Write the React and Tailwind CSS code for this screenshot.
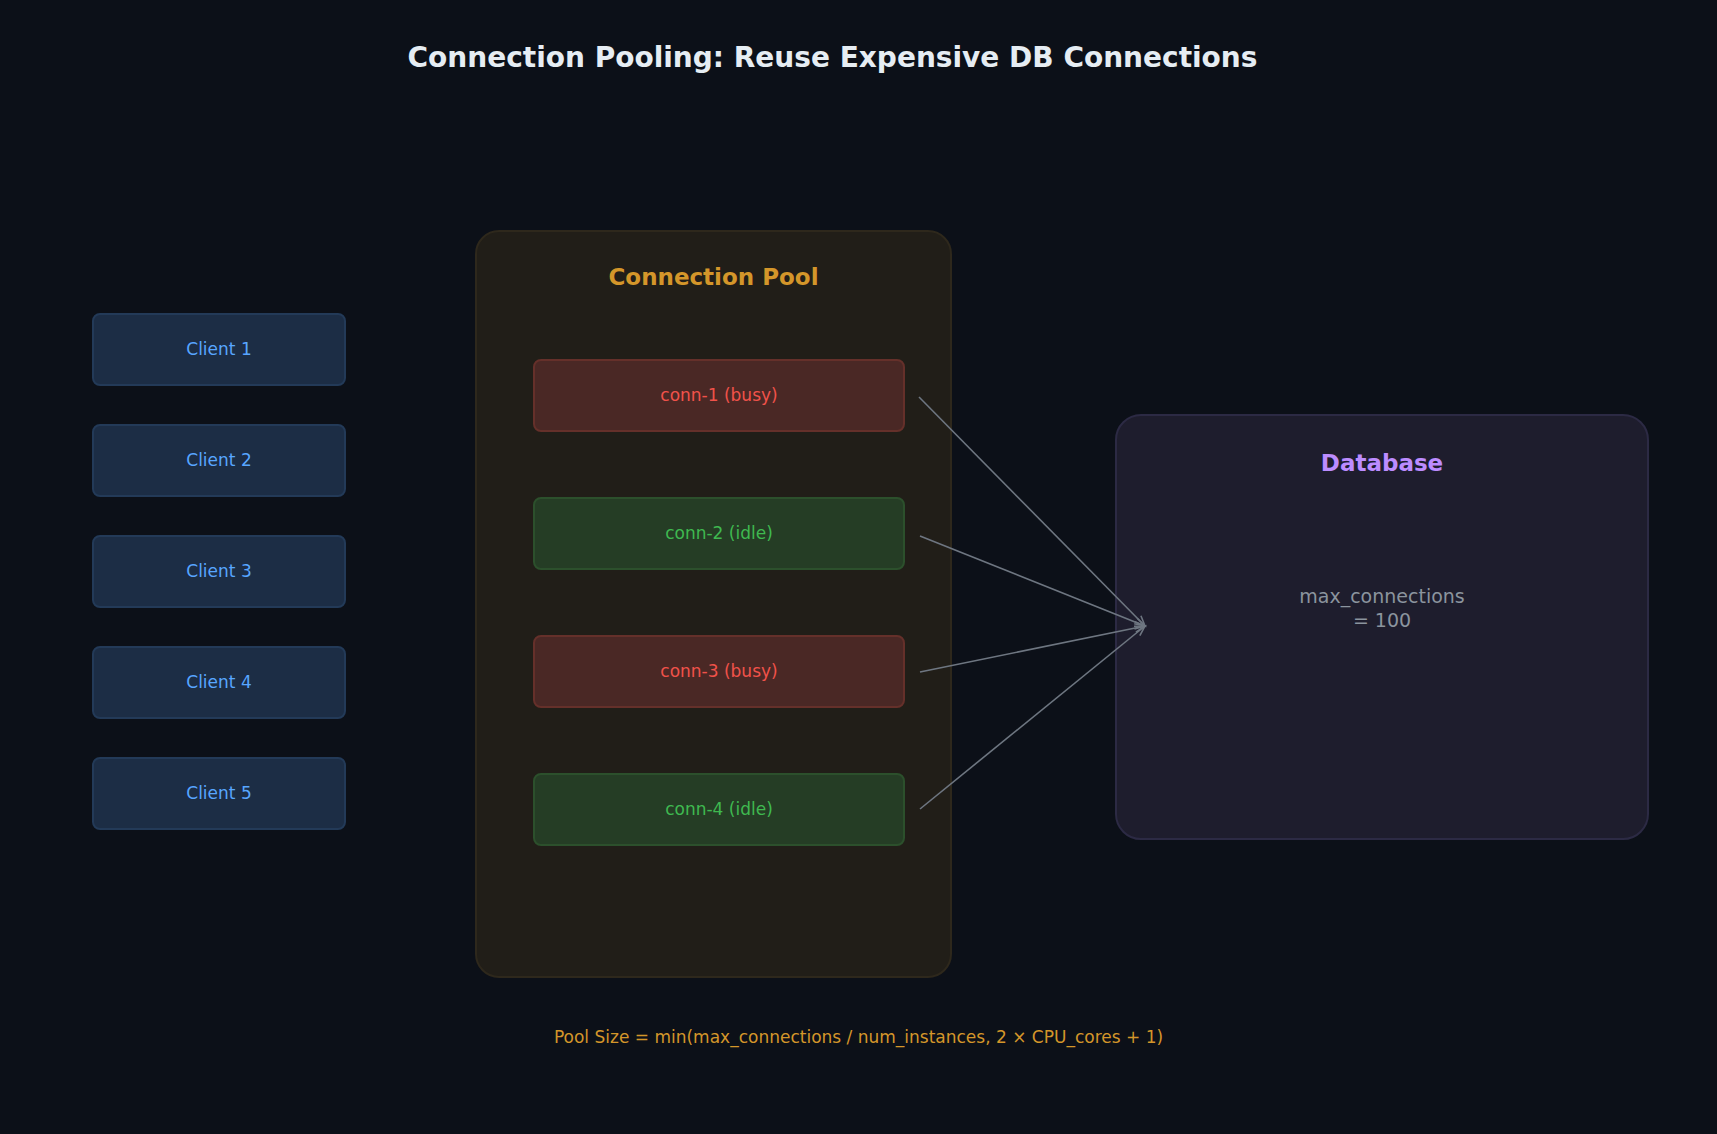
export default function App() {
  const clients = ["Client 1", "Client 2", "Client 3", "Client 4", "Client 5"];
  const conns = [
    { t: "conn-1 (busy)", busy: true },
    { t: "conn-2 (idle)", busy: false },
    { t: "conn-3 (busy)", busy: true },
    { t: "conn-4 (idle)", busy: false },
  ];
  return (
    <div className="relative w-[1717px] h-[1134px] bg-[#0c1018] overflow-hidden" style={{ fontFamily: '"DejaVu Sans", sans-serif' }}>
      <div className="pt-[40px] pr-[52px] text-center text-[28px] leading-[36px] font-bold text-[#e6edf3]">
        Connection Pooling: Reuse Expensive DB Connections
      </div>
      <div className="mt-[154px] flex items-start">
        <div className="ml-[92px] mt-[83px] flex flex-col gap-[38px]">
          {clients.map((c) => (
            <div key={c} className="w-[254px] h-[73px] rounded-[8px] bg-[#1c2d45] border-2 border-[#233a58] flex items-center justify-center text-[17px] text-[#58a6ff]">{c}</div>
          ))}
        </div>
        <div className="ml-[129px] w-[477px] h-[748px] rounded-[24px] bg-[#211e18] border-2 border-[#2e281c] flex flex-col pt-[30px]">
          <div className="text-center text-[23px] leading-[30px] font-bold text-[#d4962a]">Connection Pool</div>
          <div className="mt-[67px] ml-[56px] flex flex-col gap-[65px]">
            {conns.map((c) => (
              <div key={c.t} className={"w-[372px] h-[73px] rounded-[8px] border-2 flex items-center justify-center text-[17px] " + (c.busy ? "bg-[#4a2825] border-[#65302a] text-[#f0524a]" : "bg-[#253d25] border-[#2c502c] text-[#3fb950]")}>{c.t}</div>
            ))}
          </div>
        </div>
        <div className="ml-[163px] mt-[184px] w-[534px] h-[426px] rounded-[26px] bg-[#1e1d2d] border-2 border-[#2c2a44] flex flex-col items-center pt-[32px]">
          <div className="text-[23px] leading-[30px] font-bold text-[#bc8cff]">Database</div>
          <div className="mt-[106px] text-center text-[19px] leading-[24px] text-[#8b949e]">max_connections<br />= 100</div>
        </div>
      </div>
      <div className="mt-[47px] text-center text-[17px] leading-[24px] text-[#d4962a]">
        Pool Size = min(max_connections / num_instances, 2 × CPU_cores + 1)
      </div>
      <svg className="absolute inset-0 pointer-events-none" width="1717" height="1134">
        {[[919, 397], [920, 536], [920, 672], [920, 809]].map(([x, y], i) => {
          const tx = 1145, ty = 626;
          const ang = Math.atan2(ty - y, tx - x);
          const a1 = ang + Math.PI - 0.4, a2 = ang + Math.PI + 0.4;
          return (
            <g key={i} stroke="#6e7681" strokeWidth="1.6" fill="none">
              <line x1={x} y1={y} x2={tx} y2={ty} />
              <polyline points={`${tx + 11 * Math.cos(a1)},${ty + 11 * Math.sin(a1)} ${tx},${ty} ${tx + 11 * Math.cos(a2)},${ty + 11 * Math.sin(a2)}`} />
            </g>
          );
        })}
      </svg>
    </div>
  );
}
